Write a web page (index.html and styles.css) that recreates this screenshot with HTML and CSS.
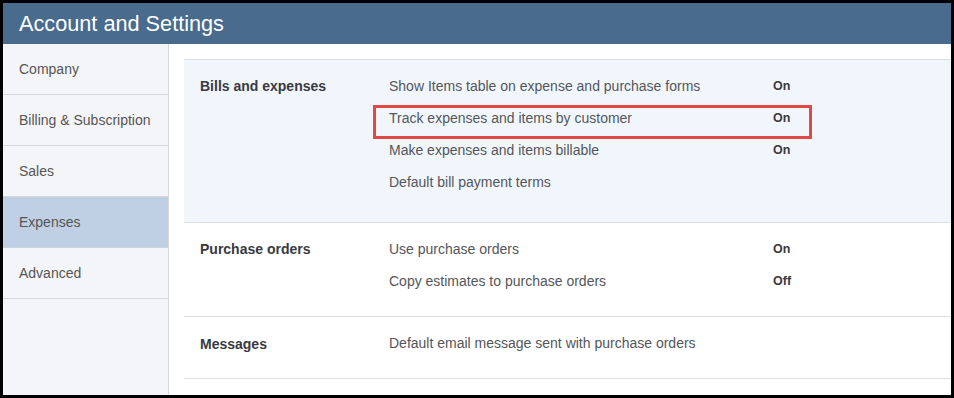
FILE: index.html
```html
<!DOCTYPE html>
<html lang="en">
<head>
<meta charset="utf-8">
<title>Account and Settings</title>
<link rel="stylesheet" href="styles.css">
</head>
<body>
<div class="frame">
  <header class="topbar">Account and Settings</header>
  <div class="main">
    <nav class="sidebar">
      <div class="nav-item">Company</div>
      <div class="nav-item">Billing &amp; Subscription</div>
      <div class="nav-item">Sales</div>
      <div class="nav-item active">Expenses</div>
      <div class="nav-item">Advanced</div>
    </nav>
    <section class="content">
      <div class="section active-section">
        <div class="section-title">Bills and expenses</div>
        <div class="rows">
          <div class="row"><span class="label">Show Items table on expense and purchase forms</span><span class="value">On</span></div>
          <div class="row highlight"><span class="label">Track expenses and items by customer</span><span class="value">On</span></div>
          <div class="row"><span class="label">Make expenses and items billable</span><span class="value">On</span></div>
          <div class="row"><span class="label">Default bill payment terms</span><span class="value"></span></div>
        </div>
      </div>
      <div class="section">
        <div class="section-title">Purchase orders</div>
        <div class="rows">
          <div class="row"><span class="label">Use purchase orders</span><span class="value">On</span></div>
          <div class="row"><span class="label">Copy estimates to purchase orders</span><span class="value">Off</span></div>
        </div>
      </div>
      <div class="section last-section">
        <div class="section-title">Messages</div>
        <div class="rows">
          <div class="row"><span class="label">Default email message sent with purchase orders</span><span class="value"></span></div>
        </div>
      </div>
    </section>
  </div>
</div>
</body>
</html>
```
FILE: styles.css
```css
* { box-sizing: border-box; }
html, body { margin: 0; padding: 0; background: #000; }
body { font-family: "Liberation Sans", Arial, sans-serif; }

.frame {
  width: 954px;
  height: 398px;
  border: 3px solid #000;
  background: #fff;
  display: flex;
  flex-direction: column;
  overflow: hidden;
}

.topbar {
  height: 41px;
  flex: none;
  background: #486b8e;
  color: #fff;
  font-size: 21.7px;
  line-height: 42px;
  padding-left: 16px;
}

.main {
  flex: 1;
  display: flex;
  min-height: 0;
}

.sidebar {
  width: 166px;
  flex: none;
  background: #f4f5f8;
  border-right: 1px solid #d6d8dc;
}

.nav-item {
  height: 51px;
  line-height: 50px;
  padding-left: 16px;
  font-size: 14px;
  color: #555;
  border-bottom: 1px solid #d4d6da;
}
.nav-item.active {
  background: #bfd0e4;
  border-bottom-color: #c7d3e0;
}

.content {
  flex: 1;
  padding: 15px 0 0 15px;
  min-width: 0;
}

.section {
  display: grid;
  grid-template-columns: 189px 1fr;
  padding: 10px 0 19px 16px;
  border-bottom: 1px solid #dcdee2;
}
.active-section {
  background: #f1f6fd;
  border-top: 1px solid #dcdee2;
  padding-bottom: 24px;
}
.last-section {
  padding-top: 10px;
  padding-bottom: 16px;
}
.last-section .section-title {
  line-height: 35px;
}

.section-title {
  font-size: 14px;
  font-weight: bold;
  color: #393a3d;
  line-height: 33px;
}

.row {
  position: relative;
  height: 32px;
  display: grid;
  grid-template-columns: 384px auto;
  align-items: center;
}
.label {
  font-size: 14px;
  color: #545659;
}
.value {
  font-size: 12.5px;
  font-weight: bold;
  color: #393a3d;
}

.row.highlight::before {
  content: "";
  position: absolute;
  left: -16px;
  top: 3px;
  width: 433px;
  height: 28px;
  border: 3px solid #e24846;
}
```
